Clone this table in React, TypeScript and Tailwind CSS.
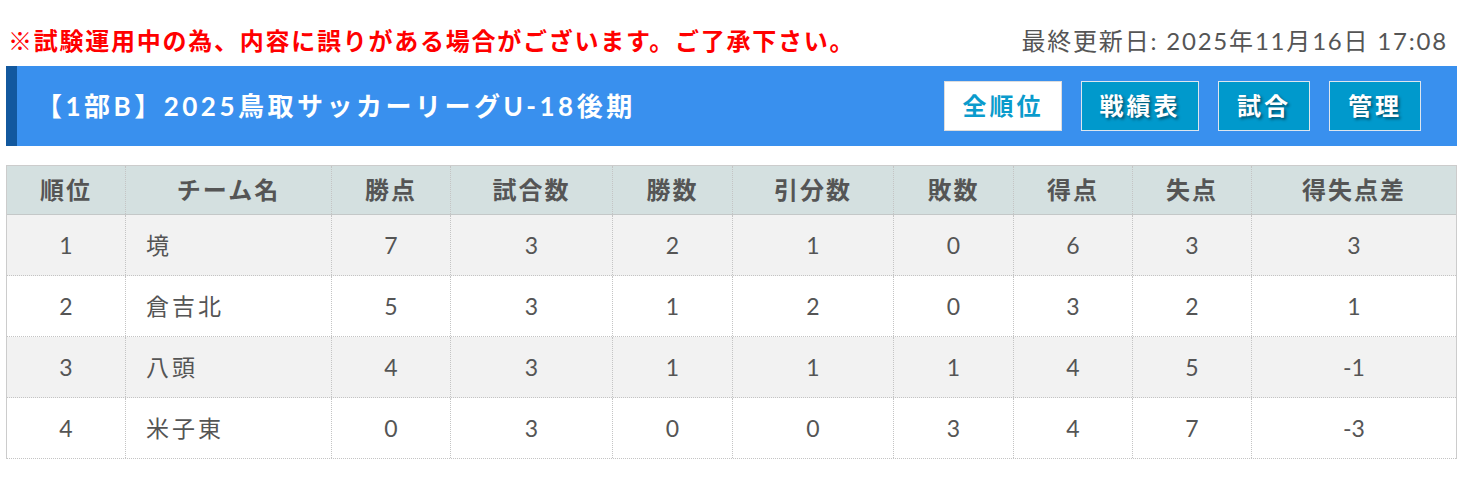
import React from "react";

const font = { fontFamily: 'Lato, "Noto Sans CJK JP", sans-serif' };

const cols = [
  { w: "w-[118px]", label: "順位" },
  { w: "w-[206px]", label: "チーム名" },
  { w: "w-[119px]", label: "勝点" },
  { w: "w-[162px]", label: "試合数" },
  { w: "w-[120px]", label: "勝数" },
  { w: "w-[161px]", label: "引分数" },
  { w: "w-[120px]", label: "敗数" },
  { w: "w-[119px]", label: "得点" },
  { w: "w-[119px]", label: "失点" },
  { w: "flex-1", label: "得失点差" },
];

const rows = [
  ["1", "境", "7", "3", "2", "1", "0", "6", "3", "3"],
  ["2", "倉吉北", "5", "3", "1", "2", "0", "3", "2", "1"],
  ["3", "八頭", "4", "3", "1", "1", "1", "4", "5", "-1"],
  ["4", "米子東", "0", "3", "0", "0", "3", "4", "7", "-3"],
];

const btnBlue =
  "h-[50px] flex items-center justify-center bg-[#0099cc] border border-[#dde6ee] text-[24px] font-bold text-white tracking-[3px] [text-shadow:2px_2px_3px_rgba(0,0,0,0.45)]";

export default function App() {
  return (
    <div className="w-[1478px] h-[480px] bg-white px-[6px]" style={font}>
      <div className="flex items-center justify-between h-[66px] pt-[16px] pl-[2px] pr-[24px]">
        <div className="text-[24px] font-bold text-[#ff0000] tracking-[1.75px] whitespace-nowrap">
          ※試験運用中の為、内容に誤りがある場合がございます。ご了承下さい。
        </div>
        <div className="text-[24px] text-[#555555] tracking-[1.8px] whitespace-nowrap">
          最終更新日: 2025年11月16日 17:08
        </div>
      </div>
      <div className="flex items-center justify-between h-[80px] w-[1451px] bg-[#3990ee] border-l-[11px] border-[#12589e] pl-[19px] pr-[36px]">
        <div className="text-[26px] font-bold text-white tracking-[3.5px] whitespace-nowrap">
          【1部B】2025鳥取サッカーリーグU-18後期
        </div>
        <div className="flex items-center gap-[19px]">
          <div className="w-[118px] h-[50px] flex items-center justify-center bg-white border border-[#dddddd] text-[24px] font-bold text-[#0a9bcc] tracking-[3px]">
            全順位
          </div>
          <div className={`w-[118px] ${btnBlue}`}>戦績表</div>
          <div className={`w-[92px] ${btnBlue}`}>試合</div>
          <div className={`w-[92px] ${btnBlue}`}>管理</div>
        </div>
      </div>
      <div className="mt-[19px] w-[1451px] border-l border-r border-t border-[#cccccc]">
        <div className="flex h-[49px] bg-[#d4e0e0] border-b border-[#c4c8c8]">
          {cols.map((c, i) => (
            <div
              key={i}
              className={`${c.w} flex items-center justify-center text-[24px] font-bold text-[#555555] tracking-[2px] ${i > 0 ? "border-l border-dotted border-[#c4c4c4]" : ""}`}
            >
              {c.label}
            </div>
          ))}
        </div>
        {rows.map((r, ri) => (
          <div
            key={ri}
            className={`flex h-[61px] border-b border-dotted border-[#c4c4c4] ${ri % 2 === 0 ? "bg-[#f2f2f2]" : "bg-white"}`}
          >
            {r.map((v, i) => (
              <div
                key={i}
                className={`${cols[i].w} flex items-center text-[23px] text-[#555555] ${i === 1 ? "justify-start pl-[20px] tracking-[3px]" : "justify-center"} ${i > 0 ? "border-l border-dotted border-[#c4c4c4]" : ""}`}
              >
                {v}
              </div>
            ))}
          </div>
        ))}
      </div>
    </div>
  );
}
